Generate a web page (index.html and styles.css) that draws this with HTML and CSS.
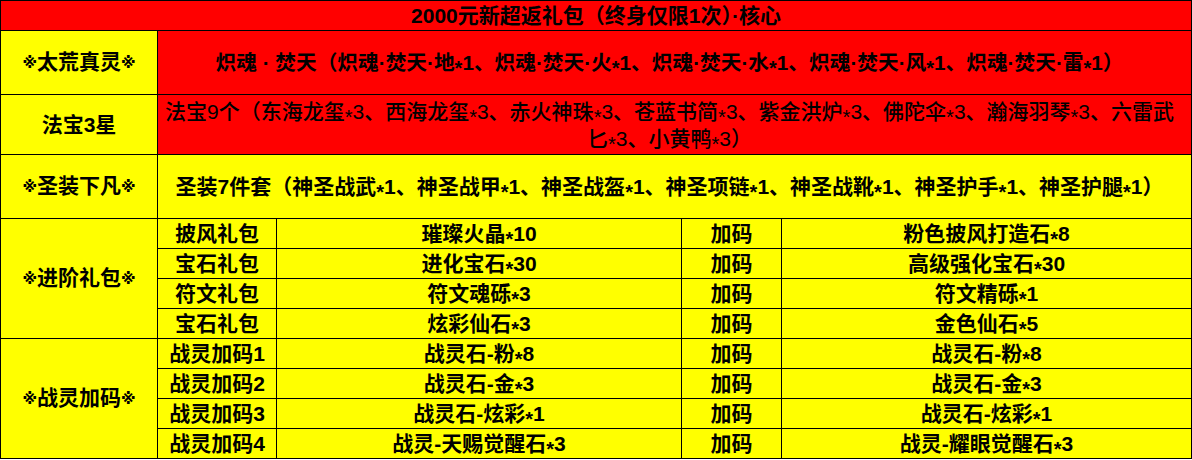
FILE: index.html
```html
<!DOCTYPE html>
<html lang="zh-CN">
<head>
<meta charset="utf-8">
<title>2000元新超返礼包</title>
<link rel="stylesheet" href="styles.css">
</head>
<body>
<table class="grid">
  <colgroup>
    <col class="c1"><col class="c2"><col class="c3"><col class="c4"><col class="c5">
  </colgroup>
  <tbody>
    <tr class="r-head">
      <td colspan="5" class="red">2000元新超返礼包（终身仅限1次）·核心</td>
    </tr>
    <tr class="r-tall">
      <td class="yellow"><span class="mark">※</span>太荒真灵<span class="mark">※</span></td>
      <td colspan="4" class="red wide tight">炽魂 · 焚天（炽魂·焚天·地<span class="ast">*</span>1、炽魂·焚天·火<span class="ast">*</span>1、炽魂·焚天·水<span class="ast">*</span>1、炽魂·焚天·风<span class="ast">*</span>1、炽魂·焚天·雷<span class="ast">*</span>1）</td>
    </tr>
    <tr class="r-mid">
      <td class="yellow">法宝3星</td>
      <td colspan="4" class="red wide regular">法宝9个（东海龙玺<span class="ast">*</span>3、西海龙玺<span class="ast">*</span>3、赤火神珠<span class="ast">*</span>3、苍蓝书简<span class="ast">*</span>3、紫金洪炉<span class="ast">*</span>3、佛陀伞<span class="ast">*</span>3、瀚海羽琴<span class="ast">*</span>3、六雷武<br>匕<span class="ast">*</span>3、小黄鸭<span class="ast">*</span>3）</td>
    </tr>
    <tr class="r-tall">
      <td class="yellow"><span class="mark">※</span>圣装下凡<span class="mark">※</span></td>
      <td colspan="4" class="yellow wide">圣装7件套（神圣战武<span class="ast">*</span>1、神圣战甲<span class="ast">*</span>1、神圣战盔<span class="ast">*</span>1、神圣项链<span class="ast">*</span>1、神圣战靴<span class="ast">*</span>1、神圣护手<span class="ast">*</span>1、神圣护腿<span class="ast">*</span>1）</td>
    </tr>
    <tr class="r-row">
      <td rowspan="4" class="yellow"><span class="mark">※</span>进阶礼包<span class="mark">※</span></td>
      <td class="yellow">披风礼包</td>
      <td class="yellow">璀璨火晶<span class="ast">*</span>10</td>
      <td class="yellow">加码</td>
      <td class="yellow">粉色披风打造石<span class="ast">*</span>8</td>
    </tr>
    <tr class="r-row">
      <td class="yellow">宝石礼包</td>
      <td class="yellow">进化宝石<span class="ast">*</span>30</td>
      <td class="yellow">加码</td>
      <td class="yellow">高级强化宝石<span class="ast">*</span>30</td>
    </tr>
    <tr class="r-row">
      <td class="yellow">符文礼包</td>
      <td class="yellow">符文魂砾<span class="ast">*</span>3</td>
      <td class="yellow">加码</td>
      <td class="yellow">符文精砾<span class="ast">*</span>1</td>
    </tr>
    <tr class="r-row">
      <td class="yellow">宝石礼包</td>
      <td class="yellow">炫彩仙石<span class="ast">*</span>3</td>
      <td class="yellow">加码</td>
      <td class="yellow">金色仙石<span class="ast">*</span>5</td>
    </tr>
    <tr class="r-row">
      <td rowspan="4" class="yellow"><span class="mark">※</span>战灵加码<span class="mark">※</span></td>
      <td class="yellow">战灵加码1</td>
      <td class="yellow">战灵石-粉<span class="ast">*</span>8</td>
      <td class="yellow">加码</td>
      <td class="yellow">战灵石-粉<span class="ast">*</span>8</td>
    </tr>
    <tr class="r-row">
      <td class="yellow">战灵加码2</td>
      <td class="yellow">战灵石-金<span class="ast">*</span>3</td>
      <td class="yellow">加码</td>
      <td class="yellow">战灵石-金<span class="ast">*</span>3</td>
    </tr>
    <tr class="r-row">
      <td class="yellow">战灵加码3</td>
      <td class="yellow">战灵石-炫彩<span class="ast">*</span>1</td>
      <td class="yellow">加码</td>
      <td class="yellow">战灵石-炫彩<span class="ast">*</span>1</td>
    </tr>
    <tr class="r-row">
      <td class="yellow">战灵加码4</td>
      <td class="yellow">战灵-天赐觉醒石<span class="ast">*</span>3</td>
      <td class="yellow">加码</td>
      <td class="yellow">战灵-耀眼觉醒石<span class="ast">*</span>3</td>
    </tr>
  </tbody>
</table>
</body>
</html>
```

FILE: styles.css
```css
html, body {
  margin: 0;
  padding: 0;
  background: #ffffff;
}

body {
  font-family: "Liberation Sans", "Noto Sans CJK SC", sans-serif;
  color: #000000;
}

.grid {
  border-collapse: collapse;
  table-layout: fixed;
  width: 1191px;
}

.c1 { width: 157px; }
.c2 { width: 119px; }
.c3 { width: 405px; }
.c4 { width: 100px; }
.c5 { width: 410px; }

.grid td {
  border: 1px solid #000000;
  padding: 0;
  text-align: center;
  vertical-align: middle;
  font-size: 21px;
  font-weight: 700;
  line-height: 24px;
  white-space: nowrap;
  overflow: hidden;
}

.grid td.regular {
  font-weight: 500;
  line-height: 27px;
}

.grid td.wide {
  padding-right: 10px;
}

.grid td.tight {
  font-size: 20.7px;
}

.mark {
  font-family: "DejaVu Sans", "Noto Sans CJK SC", sans-serif;
  font-size: 15px;
  font-weight: 700;
  vertical-align: 1px;
}

.ast {
  font-size: 20px;
  vertical-align: -5px;
  line-height: 0;
}

.red { background: #ff0000; }
.yellow { background: #ffff00; }

.r-head { height: 30px; }
.r-tall { height: 64px; }
.r-mid { height: 60px; }
.r-row { height: 30px; }
```
